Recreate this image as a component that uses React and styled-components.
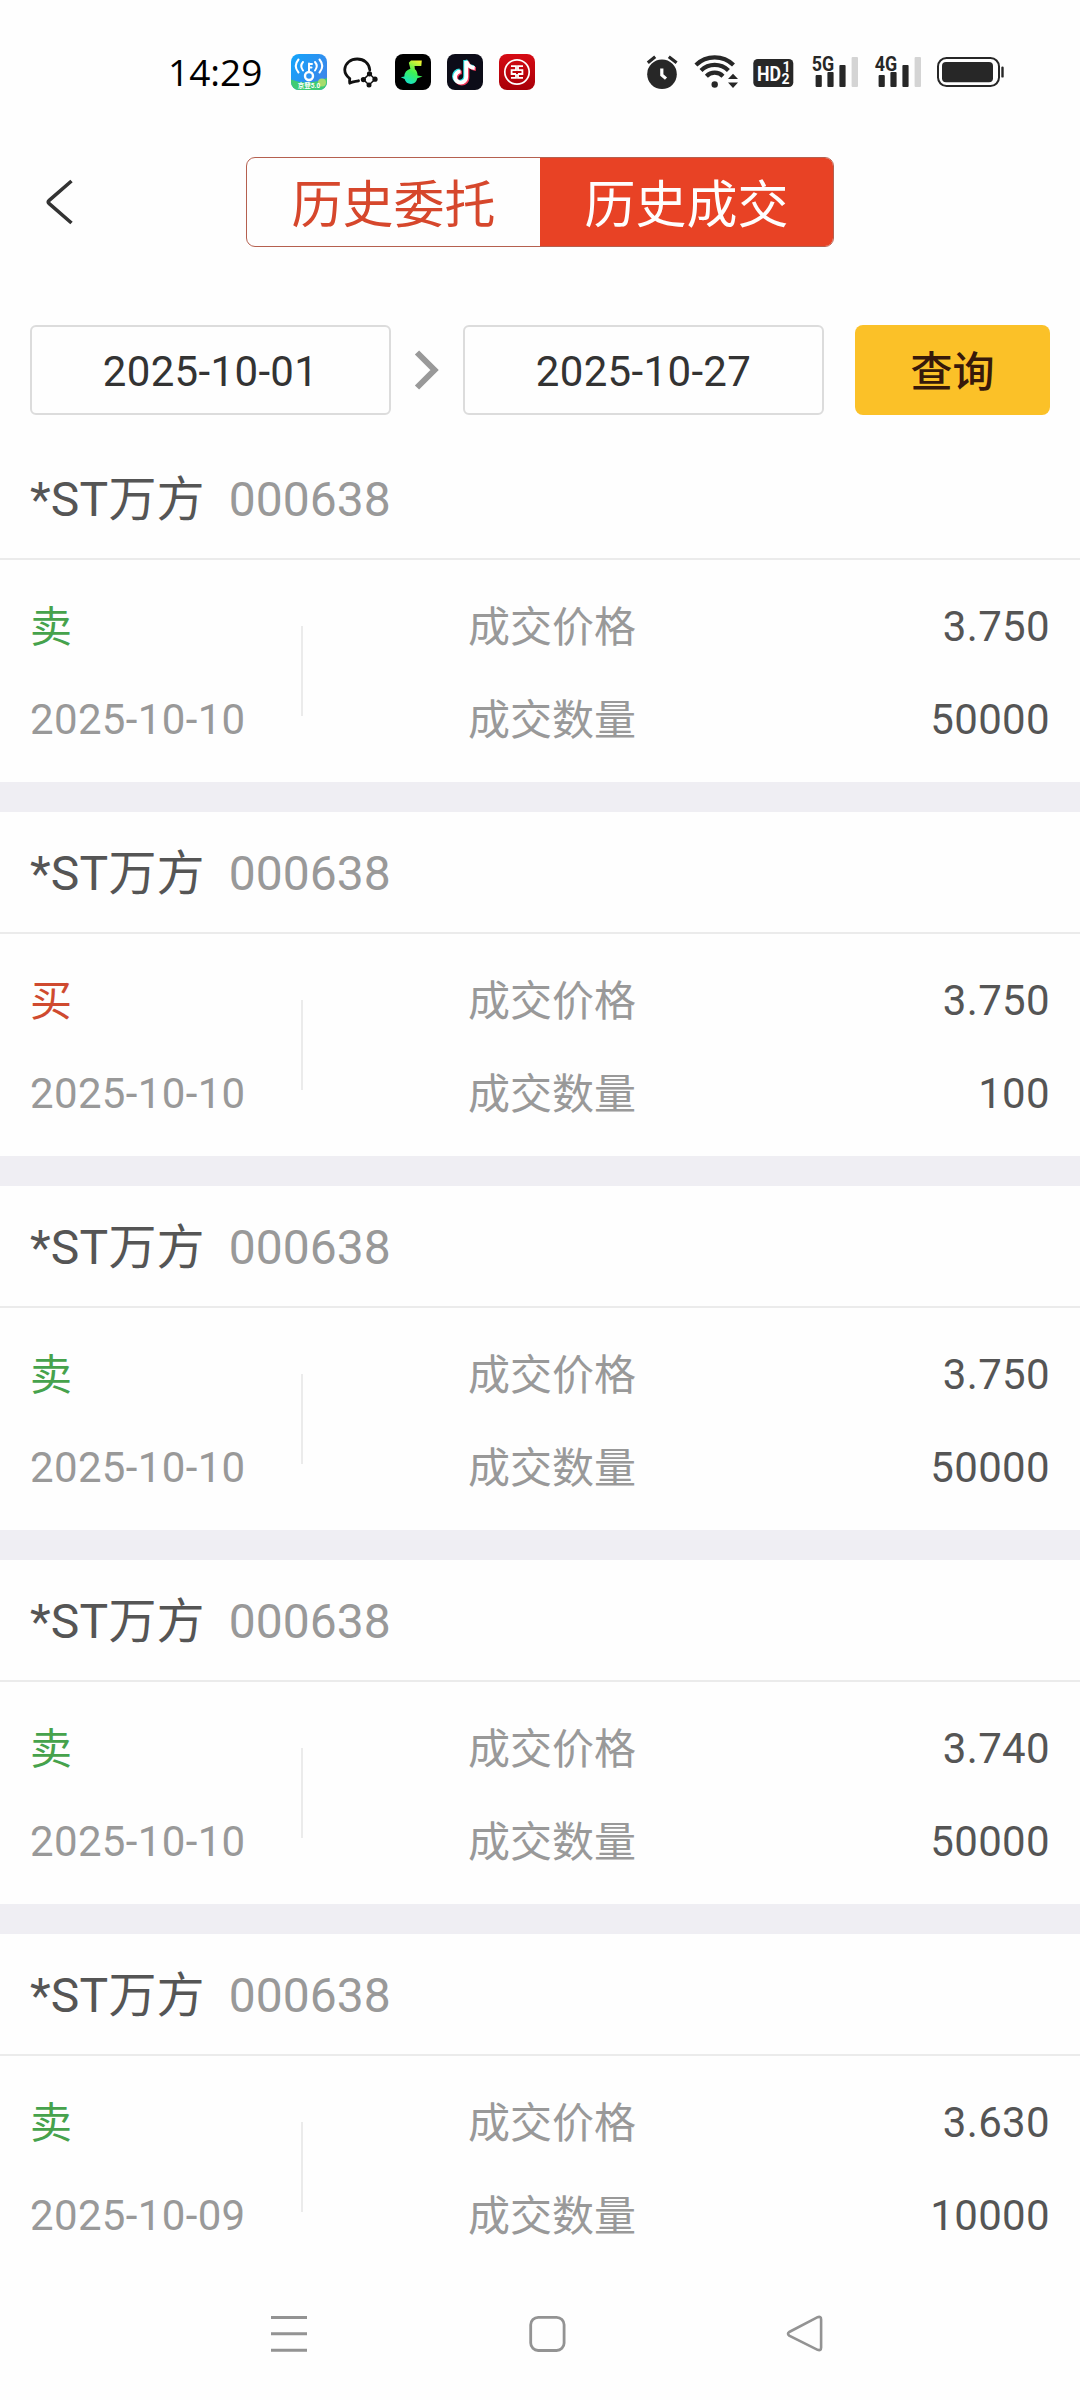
import React, { useState } from 'react';
import styled, { createGlobalStyle } from 'styled-components';

const deals = [
    { id: 1, name: '*ST万方', code: '000638', side: '卖', date: '2025-10-10', price: '3.750', amount: '50000' },
    { id: 2, name: '*ST万方', code: '000638', side: '买', date: '2025-10-10', price: '3.750', amount: '100' },
    { id: 3, name: '*ST万方', code: '000638', side: '卖', date: '2025-10-10', price: '3.750', amount: '50000' },
    { id: 4, name: '*ST万方', code: '000638', side: '卖', date: '2025-10-10', price: '3.740', amount: '50000' },
    { id: 5, name: '*ST万方', code: '000638', side: '卖', date: '2025-10-09', price: '3.630', amount: '10000' },
];

const WifiKeyIcon = () => (
    <svg width="36" height="36" viewBox="0 0 36 36">
        <defs>
            <linearGradient id="wifiKey" x1="0" y1="0" x2="1" y2="0.6">
                <stop offset="0" stopColor="#12a5fb" />
                <stop offset="1" stopColor="#3b86ea" />
            </linearGradient>
            <clipPath id="wifiKeyClip">
                <rect width="36" height="36" rx="8" />
            </clipPath>
        </defs>
        <g clipPath="url(#wifiKeyClip)">
            <rect width="36" height="36" fill="url(#wifiKey)" />
            <path d="M0 25.5Q9 29 18 28.5T36 24V36H0Z" fill="#3fcb74" />
            <circle cx="31" cy="28.5" r="4" fill="#a5dc6c" />
        </g>
        <g fill="none" stroke="#fff" strokeWidth="2" strokeLinecap="round">
            <path d="M7.5 5.5Q2 12 7.5 18.5" />
            <path d="M12 8Q8.5 12 12 16.5" />
            <path d="M28.5 5.5Q34 12 28.5 18.5" />
            <path d="M24 8Q27.5 12 24 16.5" />
            <path d="M18 18V9.5M18 10H21M18 13.5H20.5" />
            <circle cx="18" cy="22" r="4" fill="#2f93f1" strokeWidth="2.4" />
        </g>
        <TinyText x="18" y="34" textAnchor="middle">京登5.0</TinyText>
    </svg>
);

const ChatIcon = () => (
    <svg width="36" height="36" viewBox="0 0 36 36">
        <path
            d="M15.5 26.8C12.5 27.6 9.6 27.2 6.8 29.2Q6.4 27 6.8 24.6C3 21.5 1.5 18.6 1.8 15.2C2.4 9 7.8 5 14.2 5C21 5 26.2 9.3 26.8 16"
            fill="none"
            stroke="#111"
            strokeWidth="2.8"
            strokeLinejoin="round"
            strokeLinecap="round"
        />
        <path d="M26.5 19.8L20.4 25.6L26 31L32 25.2Z" fill="#fefefe" stroke="#111" strokeWidth="1.5" />
        <g fill="#111">
            <circle cx="26.5" cy="19.8" r="2.6" />
            <circle cx="20.4" cy="25.6" r="2.6" />
            <circle cx="32" cy="25.2" r="2.6" />
            <circle cx="26" cy="31" r="2.5" />
        </g>
    </svg>
);

const MusicIcon = () => (
    <svg width="36" height="36" viewBox="0 0 36 36">
        <defs>
            <linearGradient id="music" x1="0.8" y1="0" x2="0.3" y2="1">
                <stop offset="0" stopColor="#f2f230" />
                <stop offset="0.5" stopColor="#3df252" />
                <stop offset="1" stopColor="#14dfd0" />
            </linearGradient>
        </defs>
        <rect width="36" height="36" rx="8" fill="#000" />
        <path
            d="M16 6.5H26.8L26.3 12H19.5L19.9 15.2Q22.4 17 22.6 21.5L27.5 22.6L22.3 24.2Q21 29.8 16 30Q11 29.8 9.6 25L5.8 23.2L9.3 22.4Q9.5 16.5 15.4 14.7L13.8 8.8Z"
            fill="url(#music)"
        />
    </svg>
);

const notePath = 'M19 6.5V22.5A5.6 5.6 0 1 1 13.4 17M19 6.5Q20.5 13 27.5 13.6';

const TiktokIcon = () => (
    <svg width="36" height="36" viewBox="0 0 36 36">
        <rect width="36" height="36" rx="8" fill="#0c0c18" />
        <g fill="none" strokeWidth="3.9" transform="translate(0.2 0.4)">
            <path d={notePath} stroke="#2fe3e3" transform="translate(-1 -0.9)" />
            <path d={notePath} stroke="#f5375a" transform="translate(1.2 1)" />
            <path d={notePath} stroke="#fff" />
        </g>
    </svg>
);

const BankIcon = () => (
    <svg width="36" height="36" viewBox="0 0 36 36">
        <defs>
            <linearGradient id="bank" x1="0" y1="0" x2="0" y2="1">
                <stop offset="0" stopColor="#d60b14" />
                <stop offset="1" stopColor="#a80008" />
            </linearGradient>
        </defs>
        <rect width="36" height="36" rx="8" fill="url(#bank)" />
        <g fill="none" stroke="#fff">
            <circle cx="18" cy="18" r="12.2" strokeWidth="1.7" />
            <path d="M12 12.2H17V16.2H12.6V20H17M12 23.8H17V20M24 12.2H19V16.2H23.4V20H19M24 23.8H19V20" strokeWidth="1.8" />
        </g>
    </svg>
);

const AlarmIcon = () => (
    <svg width="34" height="36" viewBox="0 0 34 36">
        <circle cx="16" cy="20.2" r="14.8" fill="#272727" />
        <path d="M1.8 8.8L9.2 2.8M22.8 2.8L30.6 8.8" stroke="#272727" strokeWidth="3.2" />
        <path d="M15.8 14.5V21L20 24.6" fill="none" stroke="#fefefe" strokeWidth="3.2" />
    </svg>
);

const WifiIcon = () => (
    <svg width="45" height="36" viewBox="0 0 45 36">
        <g fill="none" stroke="#272727" strokeWidth="4.2">
            <path d="M1.9 10.9A27 27 0 0 1 39.5 10.9" />
            <path d="M7 16.4A19.5 19.5 0 0 1 34.4 16.4" />
            <path d="M12.4 22.2A11.6 11.6 0 0 1 29 22.2" />
        </g>
        <circle cx="20.7" cy="30.5" r="3.2" fill="#272727" />
        <path d="M34 25L39 19.8L44 25ZM34 28.5H44L39 34Z" fill="#272727" />
    </svg>
);

const HdIcon = () => (
    <svg width="44" height="36" viewBox="0 0 44 36">
        <rect x="0.3" y="5" width="40" height="28" rx="4.5" fill="#272727" />
        <BadgeText x="4" y="27" fontSize="21" fill="#fefefe" textLength="24" lengthAdjust="spacingAndGlyphs">HD</BadgeText>
        <BadgeText x="29.4" y="18.2" fontSize="14" fill="#fefefe">1</BadgeText>
        <BadgeText x="28.6" y="30" fontSize="14" fill="#fefefe">2</BadgeText>
    </svg>
);

const SignalIcon = ({ label, width }) => (
    <svg width={width} height="48" viewBox={`0 -6 ${width} 48`}>
        <BadgeText x="0.8" y="16.6" fontSize="21" fill="#272727" textLength="22.4" lengthAdjust="spacingAndGlyphs">{label}</BadgeText>
        <g fill="#272727">
            <rect x="4.6" y="21" width="6.2" height="12" rx="1" />
            <rect x="16.4" y="18" width="6.2" height="15" rx="1" />
            <rect x="28.4" y="11" width="6.2" height="22" rx="1" />
        </g>
        <rect x="40.6" y="3" width="6.4" height="30" rx="1" fill="#d4d4d4" />
    </svg>
);

const BatteryIcon = () => (
    <svg width="69" height="36" viewBox="0 0 69 36">
        <rect x="2" y="4" width="61" height="28" rx="8.5" fill="none" stroke="#272727" strokeWidth="2" />
        <rect x="6" y="8" width="51" height="20.2" rx="4" fill="#272727" />
        <rect x="65.3" y="12.6" width="2.4" height="11" rx="1.2" fill="#272727" />
    </svg>
);

const App = () => {
    const [tab, setTab] = useState('deal');

    return (
        <Screen>
            <GlobalStyle />
            <StatusBar>
                <Time>14:29</Time>
                <AppIcons>
                    <WifiKeyIcon />
                    <ChatIcon />
                    <MusicIcon />
                    <TiktokIcon />
                    <BankIcon />
                </AppIcons>
                <SystemIcons>
                    <AlarmIcon />
                    <WifiIcon />
                    <HdIcon />
                    <SignalIcon label="5G" width={49} />
                    <SignalIcon label="4G" width={48} />
                    <BatteryIcon />
                </SystemIcons>
            </StatusBar>

            <Header>
                <BackButton>
                    <svg width="30" height="48" viewBox="0 0 30 48">
                        <path d="M26.5 3L4.2 22.3Q2.2 24 4.2 25.7L26.5 45" fill="none" stroke="#333" strokeWidth="3.6" />
                    </svg>
                </BackButton>
                <Tabs>
                    <Tab $active={tab === 'order'} onClick={() => setTab('order')}>历史委托</Tab>
                    <Tab $active={tab === 'deal'} onClick={() => setTab('deal')}>历史成交</Tab>
                </Tabs>
            </Header>

            <Filter>
                <DateBox>2025-10-01</DateBox>
                <Arrow>
                    <svg width="26" height="42" viewBox="0 0 26 42">
                        <path d="M3 3.5L20.5 21L3 38.5" fill="none" stroke="#999" strokeWidth="6" />
                    </svg>
                </Arrow>
                <DateBox>2025-10-27</DateBox>
                <QueryButton>查询</QueryButton>
            </Filter>

            <DealList>
                {deals.map((deal) => (
                    <Deal key={deal.id}>
                        <DealTitle>
                            <StockName>{deal.name}</StockName>
                            <StockCode>{deal.code}</StockCode>
                        </DealTitle>
                        <DealBody>
                            <DealSide>
                                <Side $buy={deal.side === '买'}>{deal.side}</Side>
                                <DealDate>{deal.date}</DealDate>
                            </DealSide>
                            <Divider />
                            <DealDetail>
                                <DetailRow>
                                    <Label>成交价格</Label>
                                    <Value>{deal.price}</Value>
                                </DetailRow>
                                <DetailRow>
                                    <Label>成交数量</Label>
                                    <Value>{deal.amount}</Value>
                                </DetailRow>
                            </DealDetail>
                        </DealBody>
                    </Deal>
                ))}
            </DealList>

            <NavBar>
                <svg width="40" height="40" viewBox="0 0 40 40">
                    <path d="M2 3.5H38M2 19.8H38M2 36.2H38" stroke="#939393" strokeWidth="3" />
                </svg>
                <svg width="40" height="40" viewBox="0 0 40 40">
                    <rect x="2.7" y="3.3" width="33.4" height="33.2" rx="7.5" fill="none" stroke="#939393" strokeWidth="2.8" />
                </svg>
                <svg width="40" height="40" viewBox="0 0 40 40">
                    <path
                        d="M3.2 18L31.6 3.2Q35.1 2 35.1 5.5V33.5Q35.1 37 31.6 35.8L3.2 21.6Q0.8 19.8 3.2 18Z"
                        fill="none"
                        stroke="#939393"
                        strokeWidth="2.6"
                    />
                </svg>
            </NavBar>
        </Screen>
    );
};

const GlobalStyle = createGlobalStyle`
    * {
        box-sizing: border-box;
    }
    body {
        margin: 0;
        background-color: #fefefe;
        font-family: Roboto, "Noto Sans CJK SC", sans-serif;
    }
    svg {
        display: block;
        flex-shrink: 0;
    }
    button {
        padding: 0;
        border: none;
        background: none;
        font-family: inherit;
    }
`;

const Screen = styled.div`
    display: flex;
    flex-direction: column;
    width: 1080px;
    height: 2400px;
    overflow: hidden;
    background-color: #fefefe;
`;

const StatusBar = styled.div`
    display: flex;
    align-items: center;
    height: 144px;
    padding: 0 75px 0 168px;
`;

const Time = styled.div`
    width: 123px;
    font-family: "Open Sans", sans-serif;
    font-size: 37px;
    font-weight: 500;
    line-height: 40px;
    color: #000;
`;

const AppIcons = styled.div`
    display: flex;
    gap: 16px;
`;

const SystemIcons = styled.div`
    display: flex;
    align-items: center;
    gap: 14px;
    margin-left: auto;
`;

const TinyText = styled.text`
    font-size: 6.5px;
    font-weight: 700;
    fill: #fff;
`;

const BadgeText = styled.text`
    font-family: Roboto, sans-serif;
    font-weight: 700;
`;

const Header = styled.div`
    display: grid;
    grid-template-columns: 246px 588px 246px;
    align-items: center;
    height: 116px;
`;

const BackButton = styled.button`
    display: flex;
    width: 30px;
    margin-left: 45px;
    cursor: pointer;
`;

const Tabs = styled.div`
    display: grid;
    grid-template-columns: 1fr 1fr;
    height: 90px;
    border: 1px solid #b5604f;
    border-radius: 9px;
    overflow: hidden;
`;

const Tab = styled.button`
    padding-top: 8px;
    font-size: 51px;
    line-height: 80px;
    color: ${({ $active }) => ($active ? '#fefefe' : '#d6472c')};
    background-color: ${({ $active }) => ($active ? '#e84225' : 'transparent')};
    cursor: pointer;
`;

const Filter = styled.div`
    display: flex;
    align-items: center;
    padding: 65px 30px 23px;
`;

const DateBox = styled.div`
    width: 361px;
    height: 90px;
    padding-top: 2px;
    border: 2px solid #dcdcdc;
    border-radius: 6px;
    font-size: 42px;
    line-height: 86px;
    letter-spacing: 0.35px;
    text-align: center;
    color: #333;
`;

const Arrow = styled.div`
    display: flex;
    justify-content: center;
    width: 72px;
`;

const QueryButton = styled.button`
    width: 195px;
    height: 90px;
    margin-left: auto;
    padding-bottom: 3px;
    border-radius: 8px;
    background-color: #fbc128;
    font-size: 42px;
    font-weight: 500;
    color: #37190a;
    cursor: pointer;
`;

const DealList = styled.div`
    flex: 1;
    min-height: 0;
    overflow: hidden;
`;

const Deal = styled.div`
    height: 374px;
    border-bottom: 30px solid #efeef3;
`;

const DealTitle = styled.div`
    display: flex;
    gap: 24px;
    height: 122px;
    padding: 2px 30px 0;
    border-bottom: 2px solid #ebebeb;
    font-size: 48px;
    line-height: 120px;
`;

const StockName = styled.span`
    letter-spacing: 0.2px;
    color: #555;
`;

const StockCode = styled.span`
    color: #999;
`;

const DealBody = styled.div`
    display: flex;
    padding: 20px 30px 0;
    font-size: 42px;
    line-height: 93px;
`;

const DealSide = styled.div`
    display: flex;
    flex-direction: column;
    width: 271px;
`;

const Side = styled.span`
    height: 93px;
    padding-top: 1px;
    color: ${({ $buy }) => ($buy ? '#cf4a2f' : '#46a24c')};
`;

const DealDate = styled.span`
    letter-spacing: 0.35px;
    color: #999;
`;

const Divider = styled.div`
    width: 2px;
    height: 90px;
    margin: 46px 165px 0 0;
    background-color: #ebebeb;
`;

const DealDetail = styled.div`
    flex: 1;
`;

const DetailRow = styled.div`
    display: flex;
    justify-content: space-between;
    height: 93px;
`;

const Label = styled.span`
    padding-top: 1px;
    color: #999;
`;

const Value = styled.span`
    letter-spacing: 0.35px;
    color: #555;
`;

const NavBar = styled.div`
    display: flex;
    align-items: center;
    justify-content: space-between;
    height: 132px;
    padding: 0 254px 0 269px;
`;

export default App;
